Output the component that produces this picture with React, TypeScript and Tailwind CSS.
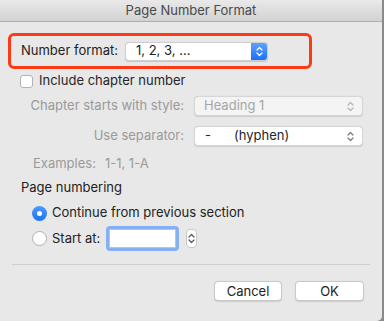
import React from 'react';

const font = { fontFamily: 'Inter, "Noto Sans", sans-serif' };

const Chevrons: React.FC<{ className?: string }> = ({ className }) => (
  <svg width="7" height="11" viewBox="0 0 7 11" className={className} fill="none" stroke="currentColor" strokeWidth="1.2" strokeLinecap="round" strokeLinejoin="round">
    <path d="M1 4 L3.5 1.5 L6 4" />
    <path d="M1 7 L3.5 9.5 L6 7" />
  </svg>
);

const PopupSelect: React.FC<{ children: React.ReactNode; disabled?: boolean }> = ({ children, disabled }) => (
  <div
    className={`flex items-center justify-between w-[169px] h-[20px] rounded-[4px] border border-[#d6d6d6] shadow-[0_0.5px_1px_rgba(0,0,0,0.12)] pl-[9px] pr-[8px] text-[13px] ${
      disabled ? 'bg-[#f4f4f4] text-[#a6a6a6]' : 'bg-white text-[#262626]'
    }`}
  >
    <div className="flex items-center">{children}</div>
    <Chevrons className={disabled ? 'text-[#b5b5b5]' : 'text-[#7a7a7a]'} />
  </div>
);

export default function App() {
  return (
    <div className="w-[384px] h-[321px] bg-[#8a8a8a]" style={font}>
      <div className="w-[382px] h-[321px] bg-[#e8e8e8] rounded-br-[5px] flex flex-col">
        {/* title bar */}
        <div className="h-[22px] shrink-0 bg-gradient-to-b from-[#e9e9e9] to-[#d2d2d2] border-b border-[#aeaeae] flex items-center justify-center text-[13px] text-[#4a4a4a]">
          Page Number Format
        </div>

        {/* highlighted format row */}
        <div className="mt-[11px] ml-[8px] w-[304px] h-[36px] shrink-0 border-[3px] border-[#fd3a16] rounded-[6px] flex items-center pl-[10px]">
          <span className="text-[13px] text-[#222] w-[104px]">Number format:</span>
          <div className="flex items-center w-[143px] h-[19px] rounded-[4px] bg-white border border-[#cfcfcf] shadow-[0_0.5px_1px_rgba(0,0,0,0.15)] overflow-hidden">
            <span className="flex-1 pl-[10px] text-[13px] text-[#222]">1, 2, 3, …</span>
            <div className="w-[16px] h-full bg-gradient-to-b from-[#5aa2fd] to-[#1d6ff7] flex items-center justify-center">
              <Chevrons className="text-white" />
            </div>
          </div>
        </div>

        {/* include chapter */}
        <div className="mt-[3px] h-[18px] shrink-0 flex items-center pl-[20px]">
          <div className="w-[13px] h-[13px] rounded-[3px] bg-white border border-[#b3b3b3]" />
          <span className="ml-[6px] text-[13px] text-[#262626]">Include chapter number</span>
        </div>

        <div className="mt-[6px] h-[20px] shrink-0 flex items-center">
          <span className="w-[184px] text-right text-[13px] text-[#9a9a9a]">Chapter starts with style:</span>
          <div className="ml-[10px]">
            <PopupSelect disabled>Heading 1</PopupSelect>
          </div>
        </div>

        <div className="mt-[10px] h-[20px] shrink-0 flex items-center">
          <span className="w-[184px] text-right text-[13px] text-[#9a9a9a]">Use separator:</span>
          <div className="ml-[10px]">
            <PopupSelect>
              <span className="w-[30px] pl-[1px]">-</span>
              <span>(hyphen)</span>
            </PopupSelect>
          </div>
        </div>

        <div className="mt-[10px] h-[16px] shrink-0 flex items-center pl-[33px] text-[13px] text-[#9a9a9a]">
          <span>Examples:</span>
          <span className="ml-[9px]">1-1, 1-A</span>
        </div>

        <div className="mt-[8px] h-[16px] shrink-0 flex items-center pl-[21px] text-[13px] text-[#222]">Page numbering</div>

        <div className="mt-[8px] h-[18px] shrink-0 flex items-center pl-[32px]">
          <div className="w-[15px] h-[15px] rounded-full bg-gradient-to-b from-[#4c9bfc] to-[#1e70f5] flex items-center justify-center">
            <div className="w-[5px] h-[5px] rounded-full bg-white" />
          </div>
          <span className="ml-[5px] text-[13px] text-[#222]">Continue from previous section</span>
        </div>

        <div className="mt-[4px] h-[25px] shrink-0 flex items-center pl-[32px]">
          <div className="w-[15px] h-[15px] rounded-full bg-white border border-[#b0b0b0]" />
          <span className="ml-[5px] text-[13px] text-[#222]">Start at:</span>
          <div className="ml-[6px] w-[73px] h-[25px] rounded-[4px] bg-[#86b1f0] p-[3px]">
            <div className="w-full h-full bg-white border border-[#a9c6f3]" />
          </div>
          <div className="ml-[7px] w-[11px] h-[19px] rounded-[4px] bg-white border border-[#c8c8c8] flex items-center justify-center">
            <Chevrons className="text-[#555]" />
          </div>
        </div>

        <div className="mt-[13px] mx-[12px] h-px shrink-0 bg-[#cfcfcf]" />

        <div className="mt-[16px] flex justify-end gap-[13px] pr-[18px]">
          <button className="w-[68px] h-[20px] rounded-[4px] bg-white border border-[#c9c9c9] shadow-[0_0.5px_1px_rgba(0,0,0,0.12)] text-[13px] text-[#222]">Cancel</button>
          <button className="w-[69px] h-[20px] rounded-[4px] bg-white border border-[#c9c9c9] shadow-[0_0.5px_1px_rgba(0,0,0,0.12)] text-[13px] text-[#222]">OK</button>
        </div>
      </div>
    </div>
  );
}
